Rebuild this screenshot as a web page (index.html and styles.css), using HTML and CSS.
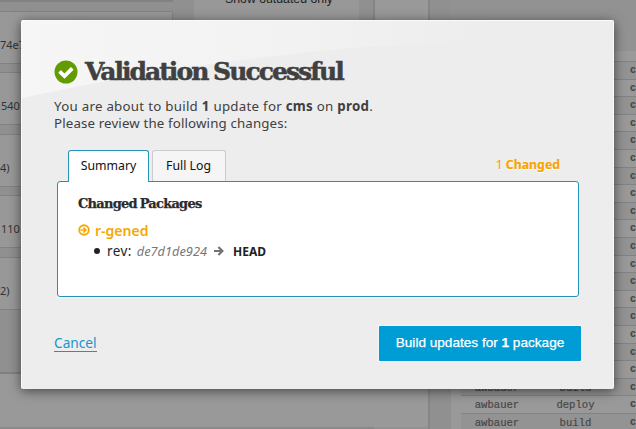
FILE: index.html
```html
<!DOCTYPE html>
<html lang="en">
<head>
<meta charset="utf-8">
<title>Validation Successful</title>
<link rel="stylesheet" href="styles.css">
</head>
<body>
<div class="page">
  <div class="main">
    <div class="panels">
      <div class="cards">
        <div class="card card-top"></div>
        <div class="card">74e7</div>
        <div class="card card-540">540</div>
        <div class="card">4)</div>
        <div class="card card-110">110</div>
        <div class="card">2)</div>
      </div>
      <div class="filter">Show outdated only</div>
      <div class="rail"></div>
    </div>
    <div class="below"></div>
    <div class="foot"></div>
  </div>
  <div class="side">
    <div class="log">
      <div class="row"><span></span><span></span><b>c</b></div>
      <div class="row"><span></span><span></span><b>c</b></div>
      <div class="row"><span></span><span></span><b>c</b></div>
      <div class="row"><span></span><span></span><b>c</b></div>
      <div class="row"><span></span><span></span><b>c</b></div>
      <div class="row"><span></span><span></span><b>c</b></div>
      <div class="row"><span></span><span></span><b>c</b></div>
      <div class="row"><span></span><span></span><b>c</b></div>
      <div class="row"><span></span><span></span><b>c</b></div>
      <div class="row"><span></span><span></span><b>c</b></div>
      <div class="row"><span></span><span></span><b>c</b></div>
      <div class="row"><span></span><span></span><b>c</b></div>
      <div class="row"><span></span><span></span><b>c</b></div>
      <div class="row"><span></span><span></span><b>c</b></div>
      <div class="row"><span></span><span></span><b>c</b></div>
      <div class="row"><span></span><span></span><b>c</b></div>
      <div class="row"><span></span><span></span><b>c</b></div>
      <div class="row"><span></span><span></span><b>c</b></div>
      <div class="row"><span>awbauer</span><span>build</span><b>c</b></div>
      <div class="row"><span>awbauer</span><span>deploy</span><b>c</b></div>
      <div class="row"><span>awbauer</span><span>build</span><b>c</b></div>
    </div>
  </div>
</div>

<div class="dialog">
  <svg class="sheen" viewBox="0 0 591 80" width="591" height="80">
    <defs><linearGradient id="g" x1="0" x2="1" y1="0" y2="0"><stop offset="0" stop-color="#f6f6f6"/><stop offset=".45" stop-color="#f2f2f2"/><stop offset=".8" stop-color="#ededed"/></linearGradient></defs>
    <path d="M0 0H591V21Q300 11 0 77Z" fill="url(#g)"/>
  </svg>
  <div class="title">
    <svg viewBox="0 0 24 24" width="24" height="24"><circle cx="12" cy="12" r="11.5" fill="#629c00"/><path d="M5.5 11.4l5 4.8 7.8-7.8" fill="none" stroke="#fff" stroke-width="3.8"/></svg>
    <h1>Validation Successful</h1>
  </div>
  <div class="intro">
    <p class="line1">You are about to build <b>1</b> update for <b>cms</b> on <b>prod</b>.</p>
    <p class="line2">Please review the following changes:</p>
  </div>
  <div class="tabs">
    <div class="tab active"><span>Summary</span></div>
    <div class="tab"><span>Full Log</span></div>
    <div class="count">1 <b>Changed</b></div>
  </div>
  <div class="content">
    <h2>Changed Packages</h2>
    <div class="package">
      <svg viewBox="0 0 12 12" width="12" height="12"><circle cx="6" cy="6" r="4.8" fill="none" stroke="#f7a800" stroke-width="1.9"/><path d="M2.6 6H7.8M5.4 3.5L7.9 6 5.4 8.5" fill="none" stroke="#f7a800" stroke-width="1.7"/></svg>
      <span>r-gened</span>
    </div>
    <div class="change">
      <i class="dot"></i><span class="key">rev:</span><em>de7d1de924</em>
      <svg viewBox="0 0 10 10" width="10" height="10"><path d="M0 5H8M4.4 1L8.4 5 4.4 9" fill="none" stroke="#737373" stroke-width="2.2"/></svg>
      <strong>HEAD</strong>
    </div>
  </div>
  <div class="actions">
    <a class="cancel">Cancel</a>
    <div class="build"><span>Build updates for <b>1</b> package</span></div>
  </div>
</div>
</body>
</html>
```

FILE: styles.css
```css
* { box-sizing: border-box; }
body { margin: 0; width: 636px; height: 429px; overflow: hidden; position: relative; background: #929292; font-family: "Noto Sans", sans-serif; color: #404040; }
h1, h2, p { margin: 0; }
svg { display: block; flex: none; }
.page { display: flex; height: 429px; }
.main { width: 430px; border-right: 2px solid #868686; display: flex; flex-direction: column; }
.panels { height: 372px; display: flex; background: #909090; }
.cards { width: 194px; display: flex; flex-direction: column; gap: 8.5px; }
.card { width: 173px; height: 53px; flex: none; border: 1px solid #828282; border-left: 0; border-radius: 0 2px 2px 0; background: #989898; font: 11px/15px "Noto Sans", sans-serif; color: #333; padding-top: 25px; }
.card-top { height: 2px; padding: 0; }
.card-540, .card-110 { padding-left: 1px; }
.filter { width: 165px; background: #989898; font: 12.3px/14px "Liberation Sans", sans-serif; color: #222; padding-left: 31px; margin-top: -8px; white-space: nowrap; }
.rail { flex: 1; margin-left: 14px; border-left: 2px solid #858585; background: #999; }
.below { height: 55px; border-top: 2px solid #808080; background: #999; }
.foot { height: 2px; width: 374px; background: #8a8a8a; }
.side { flex: 1; padding-left: 21px; background: linear-gradient(#929292 51px, #999 51px); box-shadow: inset 21px 0 #909090; }
.log { margin: 61px 0 0 10px; }
.row { height: 17.6px; display: grid; grid-template-columns: 72px 85px 1fr; border-top: 1px solid #828282; background: #999; font: 10.6px/18px "Liberation Mono", monospace; color: #484848; text-align: center; overflow: hidden; white-space: nowrap; -webkit-text-stroke: .2px #484848; }
.row:nth-child(odd) { background: #939393; }
.row b { text-align: left; padding-left: 12px; font-size: 10px; }

.dialog { position: absolute; left: 21px; top: 20px; width: 593px; height: 369px; background: #ededed; border: 1px solid #fafafa; border-bottom-color: #eee; border-radius: 2px; box-shadow: 0 2px 12px rgba(0,0,0,.55); padding: 38px 32px 0; }
.sheen { position: absolute; left: 0; top: 0; }
.title { position: relative; display: flex; height: 26px; align-items: center; }
h1 { margin-left: 7px; font: bold 25px/26px "DejaVu Serif", serif; letter-spacing: -1.95px; word-spacing: -1px; color: #404040; white-space: nowrap; -webkit-text-stroke: .5px #404040; }
.intro { position: relative; margin-top: 13px; font-size: 13.3px; line-height: 16.5px; white-space: nowrap; }
.line1 { letter-spacing: .27px; }
.line2 { letter-spacing: .14px; }
.tabs { margin: 19px 0 0 14px; display: flex; align-items: flex-start; height: 31px; }
.tab { height: 31px; width: 74px; margin-right: 3px; border: 1px solid #ccc; border-bottom: 0; border-radius: 3px 3px 0 0; background: #f5f5f5; color: #111; font-size: 12.3px; line-height: 29px; text-align: center; white-space: nowrap; }
.tab.active { position: relative; width: 81px; height: 32px; background: #fff; border-color: #2693b8; }
.tab:not(.active) span { margin-right: 1px; }
.count { margin-left: auto; margin-right: 21px; font-size: 12.3px; line-height: 29px; color: #f7a400; text-shadow: 0 1px #fff; white-space: nowrap; -webkit-text-stroke: .15px #f7a400; }
.content { margin: 0 0 0 3px; width: 522px; height: 116px; border: 1px solid #2590b7; border-radius: 3px; background: #fff; padding: 14px 20px; box-shadow: 0 1px #f8f8f8; }
h2 { font: bold 13px/16px "DejaVu Serif", serif; letter-spacing: -.75px; word-spacing: -1px; color: #2b2b2b; white-space: nowrap; -webkit-text-stroke: .25px #2b2b2b; }
.package { display: flex; align-items: center; height: 20px; margin-top: 8px; font-size: 14px; font-weight: 600; color: #f7a800; }
.package span { margin-left: 5px; }
.change { display: flex; align-items: center; height: 20px; margin-top: 1px; padding-left: 16px; font-size: 13.5px; color: #222; white-space: nowrap; }
.dot { width: 6px; height: 6px; border-radius: 50%; background: #222; margin-right: 7px; }
.key { letter-spacing: .4px; }
.change em { margin: 0 7px 0 5px; font-size: 12.8px; color: #777; }
.change strong { margin-left: 9px; font-size: 12px; }
.actions { display: flex; justify-content: space-between; margin-top: 29px; }
.cancel { align-self: flex-start; margin-top: 9px; font-size: 13.7px; line-height: 16px; color: #1597ca; text-decoration: none; border-bottom: 1px solid #1597ca; }
.build { width: 202px; height: 35px; border-radius: 1px; background: #009cd6; color: #fff; font: 13.6px/34px "Liberation Sans", sans-serif; text-align: center; white-space: nowrap; box-shadow: 0 0 0 1px #f5f5f5; -webkit-text-stroke: .25px #fff; }
```
